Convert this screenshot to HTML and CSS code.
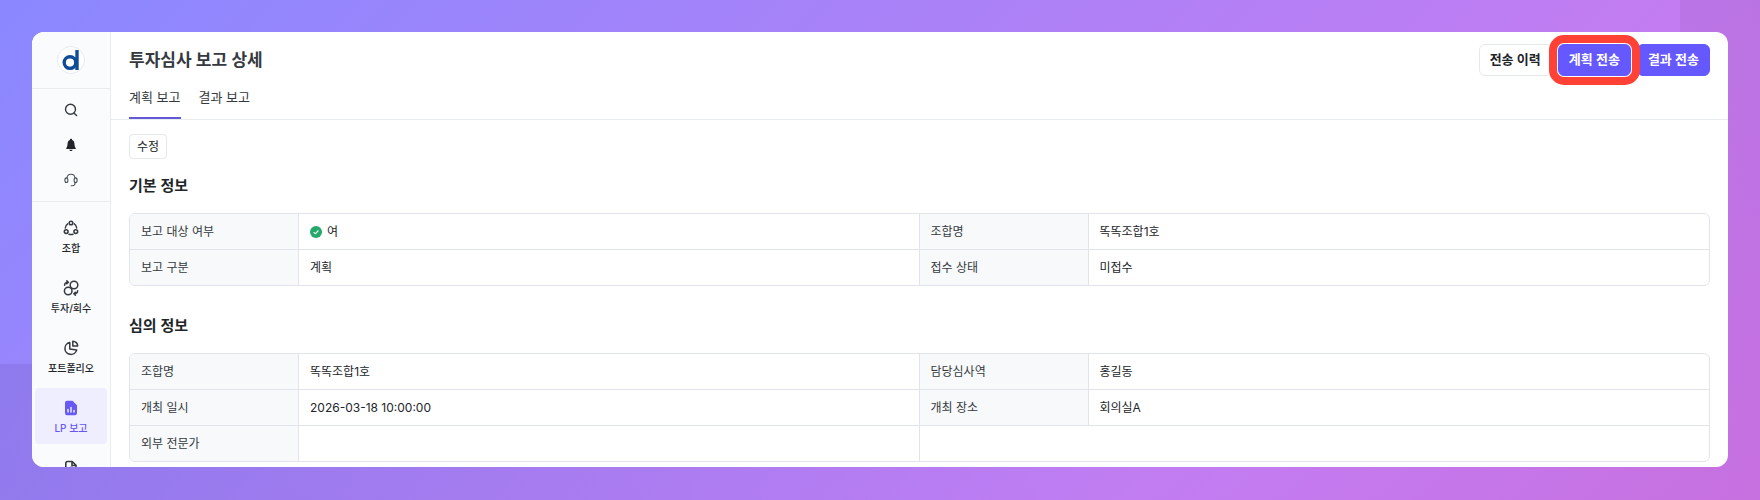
FILE: index.html
```html
<!DOCTYPE html>
<html lang="ko">
<head>
    <meta charset="utf-8">
    <title>투자심사 보고 상세</title>
    <meta name="viewport" content="width=device-width, initial-scale=1">
    <link rel="stylesheet" href="styles.css">
</head>
<body>
    <div class="panel">
        <aside class="sidebar">
            <a class="logo" href="#" aria-label="d">
                <svg viewBox="0 0 28 28" width="28" height="28">
                    <circle cx="14" cy="14" r="13.5" fill="#fff" stroke="#e6eaf0"/>
                    <circle cx="13" cy="16.6" r="5.8" fill="none" stroke="#0e4c96" stroke-width="3.4"/>
                    <path d="M20 4v20" fill="none" stroke="#0e4c96" stroke-width="3.4"/>
                </svg>
            </a>
            <div class="tools">
                <button aria-label="검색">
                    <svg viewBox="0 0 14 14" width="14" height="14" fill="none" stroke="#343a40" stroke-width="1.4" stroke-linecap="round">
                        <circle cx="6.5" cy="6.3" r="5"/>
                        <path d="M10.2 10.2l2.4 2.4"/>
                    </svg>
                </button>
                <button aria-label="알림">
                    <svg viewBox="0 0 14 14" width="14" height="14" fill="#212529">
                        <path d="M7 .8c.7 0 1.1.5 1.1 1.1C9.600 2.400 10.300 3.600 10.400 5.200c.1 2.200.5 3.700 1.300 5 .3.500 0 .9-.5.9H2.800c-.5 0-.8-.4-.5-.9.8-1.300 1.200-2.800 1.300-5 .1-1.600.8-2.800 2.300-3.300C5.900 1.300 6.300.8 7 .8z"/>
                        <path d="M5.300 11.700h3.400c-.2.900-.8 1.400-1.700 1.400s-1.500-.5-1.700-1.400z"/>
                    </svg>
                </button>
                <button aria-label="고객 지원">
                    <svg viewBox="0 0 14 14" width="14" height="14" fill="none" stroke="#495057" stroke-width="1.1" stroke-linecap="round">
                        <path d="M3 5C3.200 2.500 4.700 1.200 7 1.200S10.800 2.500 11 5"/>
                        <ellipse cx="2.400" cy="7.200" rx="1.500" ry="2.300"/>
                        <ellipse cx="11.600" cy="7.200" rx="1.500" ry="2.300"/>
                        <path d="M11.200 9.500c0 2-1 3.200-3 3.300H7.200"/>
                    </svg>
                </button>
            </div>
            <nav class="menu">
                <a href="#">
                    <svg viewBox="0 0 16 16" width="16" height="16" fill="none" stroke="#343a40" stroke-width="1.5" stroke-linecap="round">
                        <circle cx="8" cy="3" r="1.8"/>
                        <circle cx="3.200" cy="11.600" r="1.900"/>
                        <circle cx="12.800" cy="11.600" r="1.900"/>
                        <path d="M4.700 3.900C3.200 5 2.400 6.200 2.300 8M11.300 3.900c1.500 1.100 2.300 2.300 2.400 4.100M6 14.200c1.300.5 2.700.5 4 0"/>
                    </svg>
                    <span>조합</span>
                </a>
                <a href="#">
                    <svg viewBox="0 0 16 16" width="16" height="16" fill="none" stroke="#343a40" stroke-width="1.5" stroke-linecap="round">
                        <circle cx="11" cy="5" r="3.8"/>
                        <circle cx="5.200" cy="11" r="3.8"/>
                        <path d="M1.600 5.200C1.600 3.300 2.700 2.200 5 2.200M3.800.8l1.500 1.400-1.500 1.500M14.600 10.800c0 1.900-1.100 3-3.400 3M12.400 12.300l-1.500 1.500 1.500 1.400"/>
                    </svg>
                    <span>투자/회수</span>
                </a>
                <a href="#">
                    <svg viewBox="0 0 16 16" width="16" height="16" fill="none" stroke="#343a40" stroke-width="1.5" stroke-linejoin="round">
                        <path d="M6.800 2.500a6 6 0 1 0 6.900 7.500L6.800 9z"/>
                        <path d="M9.800 1.200v4.900h4.900c0-2.700-2.100-4.900-4.900-4.900z"/>
                    </svg>
                    <span>포트폴리오</span>
                </a>
                <a class="active" href="#">
                    <svg viewBox="0 0 16 16" width="16" height="16">
                        <path d="M4 .8h5.500l4.500 4.500V13a2.200 2.200 0 0 1-2.200 2.200H4.200A2.200 2.200 0 0 1 2 13V2.800a2 2 0 0 1 2-2z" fill="#6558f5"/>
                        <path d="M5 12V9.500M8 12V7.500M11 12v-1.700" stroke="#fff" stroke-width="1.3" stroke-linecap="round"/>
                    </svg>
                    <span>LP 보고</span>
                </a>
                <a href="#" aria-label="문서">
                    <svg viewBox="0 0 16 16" width="16" height="16" fill="none" stroke="#343a40" stroke-width="1.6" stroke-linejoin="round">
                        <path d="M12.500 14.500h-8A1.700 1.700 0 0 1 2.800 12.800V3.200c0-.9.8-1.700 1.700-1.700h4.700L13 5.300v3M9 1.500v4h4"/>
                        <circle cx="8.500" cy="9.500" r="2.200"/>
                    </svg>
                </a>
            </nav>
        </aside>

        <main class="content">
            <header class="header">
                <div class="title-row">
                    <h1>투자심사 보고 상세</h1>
                    <div class="actions">
                        <button class="btn">전송 이력</button>
                        <button class="btn primary marked">계획 전송</button>
                        <button class="btn primary">결과 전송</button>
                    </div>
                </div>
                <nav class="tabs">
                    <a class="on" href="#">계획 보고</a>
                    <a href="#">결과 보고</a>
                </nav>
            </header>

            <div class="body">
                <button class="edit">수정</button>

                <section>
                    <h2>기본 정보</h2>
                    <table class="info">
                        <tr>
                            <th>보고 대상 여부</th>
                            <td>
                                <span class="yes">
                                    <svg viewBox="0 0 12 12" width="12" height="12">
                                        <circle cx="6" cy="6" r="6" fill="#22a96b"/>
                                        <path d="M3.600 6.200l1.700 1.600 3.100-3.300" fill="none" stroke="#fff" stroke-width="1.1"/>
                                    </svg>
                                    여
                                </span>
                            </td>
                            <th>조합명</th>
                            <td>똑똑조합1호</td>
                        </tr>
                        <tr>
                            <th>보고 구분</th>
                            <td>계획</td>
                            <th>접수 상태</th>
                            <td>미접수</td>
                        </tr>
                    </table>
                </section>

                <section>
                    <h2>심의 정보</h2>
                    <table class="info">
                        <tr>
                            <th>조합명</th>
                            <td>똑똑조합1호</td>
                            <th>담당심사역</th>
                            <td>홍길동</td>
                        </tr>
                        <tr>
                            <th>개최 일시</th>
                            <td>2026-03-18 10:00:00</td>
                            <th>개최 장소</th>
                            <td>회의실A</td>
                        </tr>
                        <tr>
                            <th>외부 전문가</th>
                            <td></td>
                            <td colspan="2"></td>
                        </tr>
                    </table>
                </section>
            </div>
        </main>
    </div>
</body>
</html>
```
FILE: styles.css
```css
* {
    margin: 0;
    padding: 0;
    box-sizing: border-box;
    font-family: Inter, 'Noto Sans CJK KR', sans-serif;
}

body {
    position: relative;
    height: 100vh;
    padding: 32px 32px 33px;
    overflow: hidden;
    color: #212529;
    background: linear-gradient(135deg, #8a88ff, #c37cf1 75%, #c770e0);
}

/* faint shades behind the panel corners */
body::before,
body::after {
    content: "";
    position: absolute;
}
body::before {
    top: 0;
    right: 0;
    width: 80px;
    height: 100%;
    background: linear-gradient(rgba(150, 85, 180, 0.2), transparent);
}
body::after {
    bottom: 0;
    left: 0;
    width: 60%;
    height: 136px;
    background: linear-gradient(to right, rgba(110, 80, 180, 0.2), transparent);
}

a {
    color: inherit;
    text-decoration: none;
}
button {
    border: 0;
    background: none;
    color: inherit;
    cursor: pointer;
}
svg {
    display: block;
    flex-shrink: 0;
}

.panel {
    position: relative;
    z-index: 1;
    display: flex;
    height: 100%;
    border-radius: 12px;
    overflow: hidden;
    background: #fff;
}

.sidebar {
    flex: 0 0 79px;
    border-right: 1px solid #e9ecef;
    background: #fafbfd;
}
.logo {
    display: flex;
    align-items: center;
    justify-content: center;
    height: 57px;
    border-bottom: 1px solid #e9ecef;
}
.tools {
    display: flex;
    flex-direction: column;
    align-items: center;
    gap: 7px;
    padding: 7px 0;
    border-bottom: 1px solid #e9ecef;
}
.tools button {
    padding: 7px;
}
.menu {
    display: flex;
    flex-direction: column;
    gap: 4px;
    padding: 6px 3px;
}
.menu a {
    display: flex;
    flex-direction: column;
    align-items: center;
    gap: 4px;
    height: 56px;
    padding: 12px 0 8px;
    border-radius: 4px;
    font-size: 10px;
    line-height: 16px;
    font-weight: 500;
}
.menu .active {
    background: #efeefe;
    color: #6558f5;
}

.content {
    flex: 1;
    min-width: 0;
}
.header {
    padding: 12px 18px 0;
    border-bottom: 1px solid #e9ecef;
}
.title-row {
    display: flex;
    align-items: center;
    justify-content: space-between;
}
h1 {
    font-size: 17px;
    line-height: 32px;
    font-weight: 600;
    color: #343a40;
}
.actions {
    display: flex;
    gap: 6px;
}
.btn {
    height: 32px;
    padding: 0 10px 3px;
    border: 1px solid #e4e7eb;
    border-radius: 6px;
    font-size: 13px;
    font-weight: 600;
}
.primary {
    border-color: #6558ff;
    background: #6558ff;
    color: #fff;
}
/* highlight ring */
.marked {
    position: relative;
    outline: 8px solid #ff4136;
    outline-offset: 1px;
}
.tabs {
    display: flex;
    gap: 18px;
}
.tabs a {
    padding: 11px 0 10px;
    border-bottom: 2px solid transparent;
    font-size: 13px;
    line-height: 20px;
    color: #343a40;
}
.tabs .on {
    border-color: #6558d8;
}

.body {
    padding: 14px 18px;
}
.edit {
    display: block;
    height: 25px;
    padding: 0 7px 2px;
    border: 1px solid #e4e7eb;
    border-radius: 4px;
    font-size: 12px;
}
section {
    margin-bottom: 13px;
}
h2 {
    padding: 15px 0;
    font-size: 15px;
    line-height: 24px;
    font-weight: 600;
}

.info {
    width: 100%;
    table-layout: fixed;
    border: 1px solid #e1e4ea;
    border-radius: 6px;
    border-spacing: 0;
    overflow: hidden;
    font-size: 12px;
    line-height: 20px;
}
.info th,
.info td {
    height: 36px;
    padding: 0 11px;
    border-right: 1px solid #e1e4ea;
    border-bottom: 1px solid #e1e4ea;
    text-align: left;
    font-weight: 400;
}
.info th {
    width: 169px;
    background: #f8f9fb;
    color: #343a40;
}
.info tr > :last-child {
    border-right: 0;
}
.info tr:last-child > * {
    height: 35px;
    border-bottom: 0;
}
.yes {
    display: flex;
    align-items: center;
    gap: 5px;
}
```
